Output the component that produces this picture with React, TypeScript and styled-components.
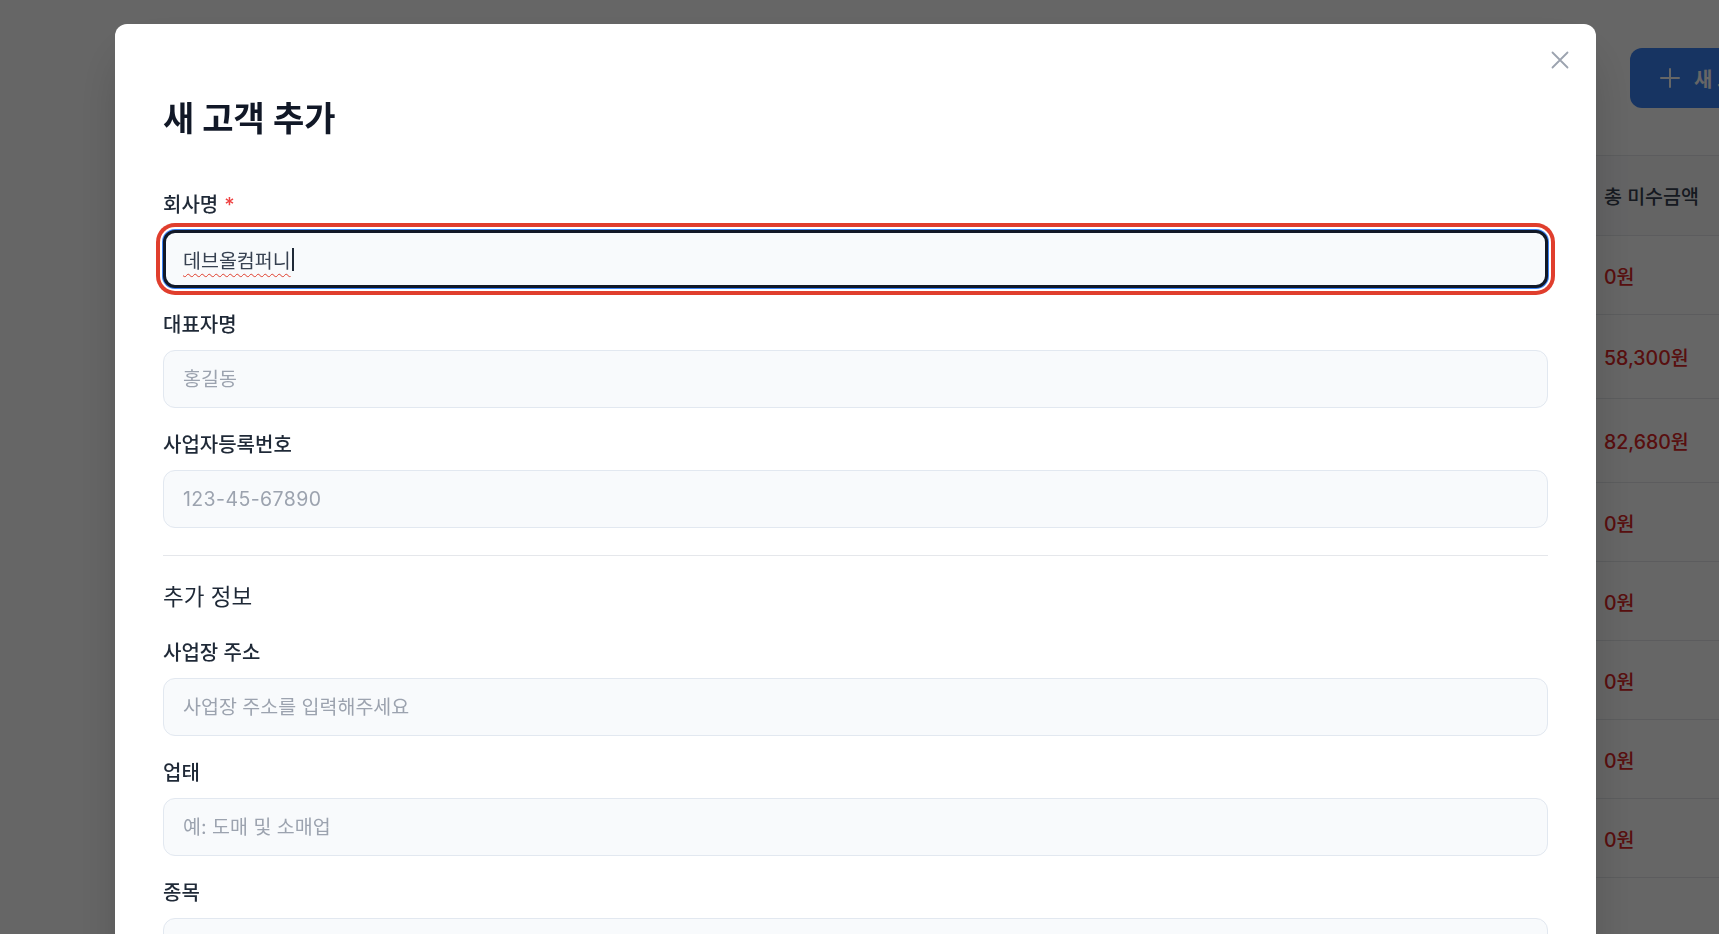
import styled, { createGlobalStyle } from 'styled-components'

const GlobalStyle = createGlobalStyle`
	* {
		box-sizing: border-box;
	}
	html,
	body {
		margin: 0;
		height: 100%;
		overflow: hidden;
		background: #ffffff;
	}
	body {
		font-family: Inter, 'Noto Sans CJK KR', 'Noto Sans', sans-serif;
		color: #1f2937;
	}
	input,
	button {
		font-family: inherit;
	}
`

const COLUMNS = '220px 180px 240px 220px 300px 297px 233px'

const customers = [
	{ name: '한빛상사', owner: '김민수', bizNo: '214-86-12345', phone: '02-555-1234', total: '1,240,000원', unpaid: '0원', tall: false },
	{ name: '대성유통', owner: '이서연', bizNo: '120-81-55421', phone: '031-712-8890', total: '358,300원', unpaid: '58,300원', tall: true },
	{ name: '미래푸드', owner: '박지훈', bizNo: '305-22-90871', phone: '042-334-1020', total: '482,680원', unpaid: '82,680원', tall: true },
	{ name: '청솔건재', owner: '최유진', bizNo: '617-03-44120', phone: '051-245-7788', total: '96,000원', unpaid: '0원', tall: false },
	{ name: '그린마트', owner: '정하늘', bizNo: '101-12-33456', phone: '02-2231-4455', total: '210,000원', unpaid: '0원', tall: false },
	{ name: '동해수산', owner: '강도윤', bizNo: '514-81-22301', phone: '033-640-1122', total: '75,500원', unpaid: '0원', tall: false },
	{ name: '서울오피스', owner: '윤지아', bizNo: '220-87-10923', phone: '02-6677-8899', total: '130,000원', unpaid: '0원', tall: false },
	{ name: '누리테크', owner: '임태현', bizNo: '409-86-78012', phone: '062-950-3344', total: '64,000원', unpaid: '0원', tall: false }
]

const PlusIcon = () => (
	<svg width="20" height="20" viewBox="0 0 20 20" fill="none" stroke="currentColor" strokeWidth="2" strokeLinecap="round">
		<path d="M10 1v18M1 10h18" />
	</svg>
)

const CloseIcon = () => (
	<svg width="18" height="18" viewBox="0 0 18 18" fill="none" stroke="currentColor" strokeWidth="1.8" strokeLinecap="round">
		<path d="M1.5 1.5l15 15M16.5 1.5l-15 15" />
	</svg>
)

const App = () => {
	return (
		<>
			<GlobalStyle />
			<S.Page>
				<S.Toolbar>
					<S.PageTitle>고객 관리</S.PageTitle>
					<S.PrimaryButton>
						<PlusIcon />
						새 고객 추가
					</S.PrimaryButton>
				</S.Toolbar>

				<S.Table>
					<S.HeaderRow>
						<S.HeadCell>고객명</S.HeadCell>
						<S.HeadCell>대표자</S.HeadCell>
						<S.HeadCell>사업자등록번호</S.HeadCell>
						<S.HeadCell>연락처</S.HeadCell>
						<S.HeadCell>최근 거래일</S.HeadCell>
						<S.HeadCell>총 거래액</S.HeadCell>
						<S.HeadCell>총 미수금액</S.HeadCell>
					</S.HeaderRow>
					{customers.map((customer, idx) => (
						<S.BodyRow key={idx} $tall={customer.tall}>
							<S.Cell>{customer.name}</S.Cell>
							<S.Cell>{customer.owner}</S.Cell>
							<S.Cell>{customer.bizNo}</S.Cell>
							<S.Cell>{customer.phone}</S.Cell>
							<S.Cell>2024-05-{String(idx + 10)}</S.Cell>
							<S.Cell>{customer.total}</S.Cell>
							<S.AmountCell>{customer.unpaid}</S.AmountCell>
						</S.BodyRow>
					))}
				</S.Table>
			</S.Page>

			<S.Overlay>
				<S.Modal>
					<S.CloseButton aria-label="닫기">
						<CloseIcon />
					</S.CloseButton>
					<S.Title>새 고객 추가</S.Title>

					<S.Form>
						<S.Field>
							<S.Label>
								회사명<S.Required>*</S.Required>
							</S.Label>
							<S.ActiveInput>
								<S.TypedText>데브올컴퍼니</S.TypedText>
								<S.Caret />
							</S.ActiveInput>
						</S.Field>

						<S.Field>
							<S.Label>대표자명</S.Label>
							<S.Input placeholder="홍길동" />
						</S.Field>

						<S.Field>
							<S.Label>사업자등록번호</S.Label>
							<S.Input placeholder="123-45-67890" $numeric />
						</S.Field>

						<S.Divider />
						<S.SectionTitle>추가 정보</S.SectionTitle>

						<S.Field>
							<S.Label>사업장 주소</S.Label>
							<S.Input placeholder="사업장 주소를 입력해주세요" />
						</S.Field>

						<S.Field>
							<S.Label>업태</S.Label>
							<S.Input placeholder="예: 도매 및 소매업" />
						</S.Field>

						<S.Field>
							<S.Label>종목</S.Label>
							<S.Input placeholder="예: 전자상거래" />
						</S.Field>

						<S.Footer>
							<S.GhostButton>취소</S.GhostButton>
							<S.SubmitButton>추가하기</S.SubmitButton>
						</S.Footer>
					</S.Form>
				</S.Modal>
			</S.Overlay>
		</>
	)
}

export default App

const Page = styled.div`
	width: 1870px;
	padding: 48px 40px 0 140px;
`
const Toolbar = styled.div`
	display: flex;
	align-items: center;
	justify-content: space-between;

	height: 60px;
	margin-bottom: 47px;
`
const PageTitle = styled.h1`
	margin: 0;
	font-size: 28px;
	font-weight: 700;
	color: #111827;
`
const PrimaryButton = styled.button`
	display: flex;
	align-items: center;
	gap: 14px;

	width: 200px;
	height: 60px;
	padding: 0 30px;

	border: 0;
	border-radius: 12px;
	background: #3b82f6;
	color: #ffffff;

	font-size: 20px;
	font-weight: 700;
	white-space: nowrap;
`

const Table = styled.div`
	border-top: 1px solid #e5e7eb;
`
const HeaderRow = styled.div`
	display: grid;
	grid-template-columns: ${COLUMNS};
	align-items: center;

	height: 80px;
	background: #f9fafb;
	border-bottom: 1px solid #e5e7eb;
`
const BodyRow = styled.div<{ $tall: boolean }>`
	display: grid;
	grid-template-columns: ${COLUMNS};
	align-items: center;

	height: ${({ $tall }) => ($tall ? 84 : 79)}px;
	border-bottom: 1px solid #e5e7eb;
`
const HeadCell = styled.div`
	padding: 0 7px;
	font-size: 19.5px;
	font-weight: 500;
	color: #374151;
	white-space: nowrap;
`
const Cell = styled.div`
	padding: 0 7px;
	font-size: 19.5px;
	color: #374151;
	white-space: nowrap;
`
const AmountCell = styled(Cell)`
	color: #dc2626;
	font-weight: 500;
`

const Overlay = styled.div`
	position: fixed;
	inset: 0;

	padding: 24px 0 0 115px;
	overflow: hidden;

	background: rgba(0, 0, 0, 0.6);
`
const Modal = styled.div`
	position: relative;

	width: 1481px;
	padding: 75px 48px 48px;

	background: #ffffff;
	border-radius: 12px;
	box-shadow: 0 25px 50px -12px rgba(0, 0, 0, 0.25);
`
const CloseButton = styled.button`
	position: absolute;
	top: 20px;
	right: 20px;

	display: flex;
	align-items: center;
	justify-content: center;

	width: 32px;
	height: 32px;
	padding: 0;

	border: 0;
	background: none;
	color: #9ca3af;
`
const Title = styled.h2`
	margin: 0 0 52px;
	font-size: 34px;
	font-weight: 700;
	line-height: 40px;
	color: #111827;
`
const Form = styled.div`
	display: flex;
	flex-direction: column;
	gap: 23px;
`
const Field = styled.div`
	display: flex;
	flex-direction: column;
`
const Label = styled.label`
	margin-bottom: 11px;
	font-size: 20px;
	font-weight: 500;
	line-height: 28px;
	color: #1f2937;
`
const Required = styled.span`
	margin-left: 6px;
	color: #ef4444;
`
const Input = styled.input<{ $numeric?: boolean }>`
	width: 100%;
	height: 58px;
	padding: 0 19px;

	border: 1px solid #e2e8f0;
	border-radius: 12px;
	background: #f8fafc;
	outline: none;

	font-size: 19.5px;
	letter-spacing: ${({ $numeric }) => ($numeric ? '0.4px' : '0')};
	color: #374151;

	&::placeholder {
		color: #9ca3af;
	}
`
const ActiveInput = styled.div`
	display: flex;
	align-items: center;

	width: 100%;
	height: 58px;
	padding: 0 17px;

	border: 3px solid #111827;
	border-radius: 12px;
	background: #f8fafc;
	box-shadow: 0 0 0 1px #3b82f6, 0 0 0 3px #ffffff, 0 0 0 7px #e03e2d;

	font-size: 19.5px;
	color: #374151;
`
const TypedText = styled.span`
	text-decoration: underline wavy #e03e2d;
	text-decoration-thickness: 1px;
	text-underline-offset: 5px;
`
const Caret = styled.span`
	display: inline-block;
	width: 2px;
	height: 23px;
	margin-left: 1px;
	background: #1f2937;
`
const Divider = styled.hr`
	height: 1px;
	margin: 4px 0 0;
	border: 0;
	background: #e5e7eb;
`
const SectionTitle = styled.h3`
	margin: 3px 0 4px;
	font-size: 22.5px;
	font-weight: 400;
	line-height: 30px;
	color: #1f2937;
`
const Footer = styled.div`
	display: flex;
	justify-content: flex-end;
	gap: 12px;
	margin-top: 18px;
`
const GhostButton = styled.button`
	height: 52px;
	padding: 0 28px;
	border: 1px solid #d1d5db;
	border-radius: 12px;
	background: #ffffff;
	font-size: 19px;
	color: #374151;
`
const SubmitButton = styled.button`
	height: 52px;
	padding: 0 28px;
	border: 0;
	border-radius: 12px;
	background: #3b82f6;
	font-size: 19px;
	font-weight: 700;
	color: #ffffff;
`

const S = {
	Page,
	Toolbar,
	PageTitle,
	PrimaryButton,
	Table,
	HeaderRow,
	BodyRow,
	HeadCell,
	Cell,
	AmountCell,
	Overlay,
	Modal,
	CloseButton,
	Title,
	Form,
	Field,
	Label,
	Required,
	Input,
	ActiveInput,
	TypedText,
	Caret,
	Divider,
	SectionTitle,
	Footer,
	GhostButton,
	SubmitButton
}
